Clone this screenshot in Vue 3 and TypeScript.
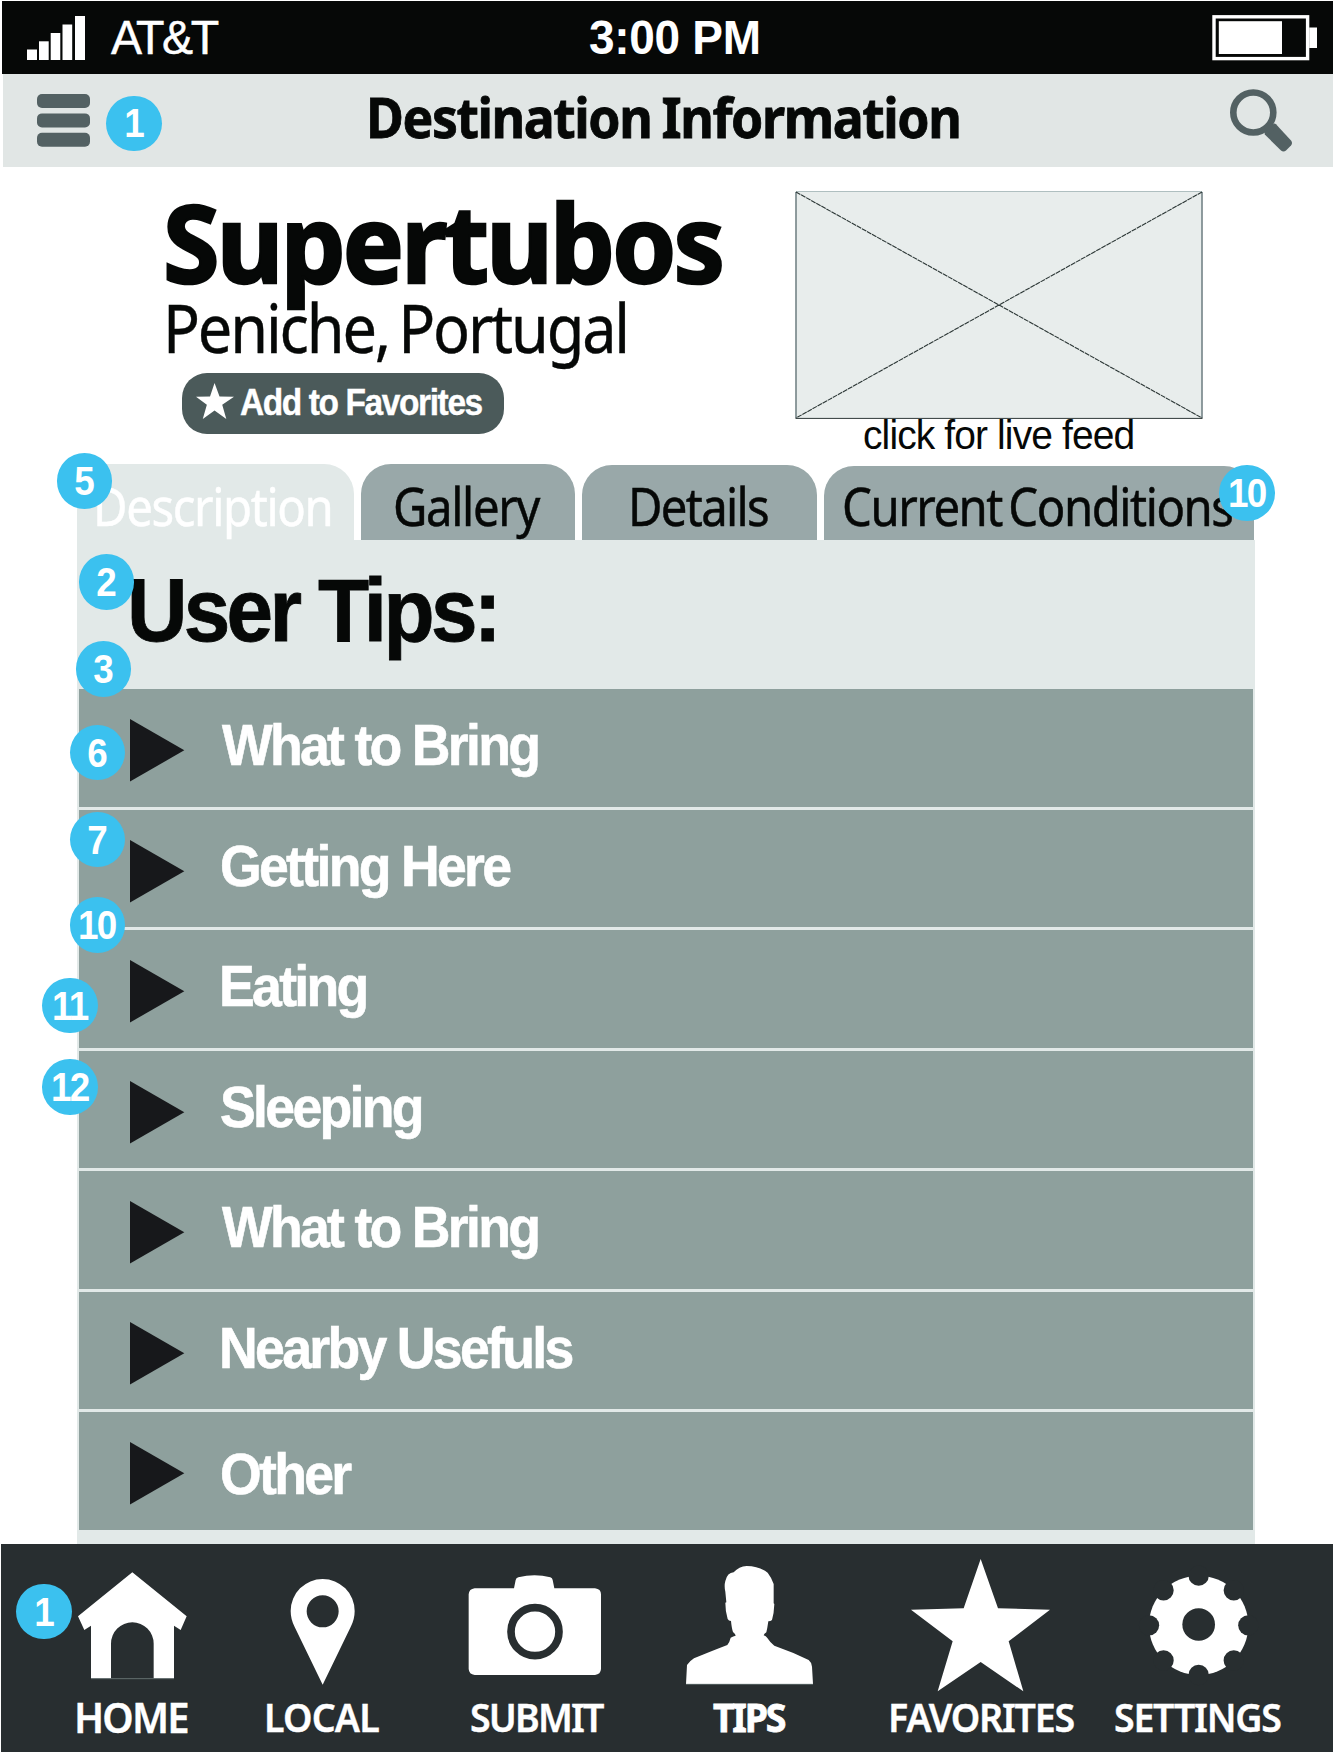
<script setup lang="ts">
interface Tab { label: string; cls: string }
interface Tip { label: string; indent: number; drop: number }
interface Badge { n: number; x: number; y: number }

const tabs: Tab[] = [
  { label: 'Description', cls: 'tab-description' },
  { label: 'Gallery', cls: 'tab-gallery' },
  { label: 'Details', cls: 'tab-details' },
  { label: 'Current Conditions', cls: 'tab-conditions' },
]

const tips: Tip[] = [
  { label: 'What to Bring', indent: 36.5, drop: 26 },
  { label: 'Getting Here', indent: 34.5, drop: 26.5 },
  { label: 'Eating', indent: 33.5, drop: 26 },
  { label: 'Sleeping', indent: 34.5, drop: 26.5 },
  { label: 'What to Bring', indent: 36.5, drop: 26 },
  { label: 'Nearby Usefuls', indent: 33.5, drop: 26 },
  { label: 'Other', indent: 34.5, drop: 32 },
]

const badges: Badge[] = [
  { n: 1, x: 134, y: 123.3 },
  { n: 5, x: 84.6, y: 480.8 },
  { n: 10, x: 1247, y: 492.8 },
  { n: 2, x: 106.6, y: 582.2 },
  { n: 3, x: 103.5, y: 669.2 },
  { n: 6, x: 97.5, y: 752.7 },
  { n: 7, x: 97.5, y: 839.7 },
  { n: 10, x: 97.5, y: 925 },
  { n: 11, x: 70, y: 1005.7 },
  { n: 12, x: 70, y: 1086.8 },
  { n: 1, x: 43.8, y: 1611.7 },
]

const notches = [0, 45, 90, 135, 180, 225, 270, 315]
</script>

<template>
  <div class="screen">
    <header class="status">
      <svg class="signal" width="49" height="45" viewBox="0 0 49 45" fill="#fff">
        <rect x="0" y="33.5" width="10" height="10.5" />
        <rect x="12" y="25.3" width="9.7" height="18.7" />
        <rect x="23.7" y="17" width="9.6" height="27" />
        <rect x="35.5" y="8.5" width="9.7" height="35.5" />
        <rect x="48" y="0" width="10" height="44" />
      </svg>
      <span class="carrier"><b class="fit">AT&amp;T</b></span>
      <span class="time"><b class="fit">3:00 PM</b></span>
      <svg class="battery" width="106" height="46" viewBox="0 0 106 46">
        <rect x="2" y="1.8" width="93.6" height="41.8" fill="none" stroke="#fff" stroke-width="3.4" />
        <rect x="6.8" y="6.2" width="63.2" height="32.8" fill="#fff" />
        <rect x="97.2" y="12.5" width="7.8" height="20.5" fill="#fff" />
      </svg>
    </header>

    <div class="titlebar">
      <svg class="menu" width="53" height="54" viewBox="0 0 53 54" fill="#536163">
        <rect y="0" width="53" height="14" rx="5" />
        <rect y="19.4" width="53" height="14" rx="5" />
        <rect y="38.7" width="53" height="14" rx="5" />
      </svg>
      <h1><span class="fit">Destination Information</span></h1>
      <svg class="search" width="64" height="66" viewBox="0 0 64 66">
        <circle cx="23.3" cy="23.5" r="20" fill="none" stroke="#536163" stroke-width="6.6" />
        <path d="M34.500 43.500 L44 34.500 Q45 34.200 46 35.200 L61 51.500 Q63 54 61 56.500 L56 61.500 Q53.500 63.500 51 61.500 L34.800 45.500 Z" fill="#536163" />
        <path d="M37 36 L43 42" stroke="#536163" stroke-width="8" />
      </svg>
    </div>

    <section class="hero">
      <div class="place">
        <h2><span class="fit">Supertubos</span></h2>
        <p class="region"><span class="fit">Peniche, Portugal</span></p>
        <button class="favorite" type="button">
          <svg width="38" height="36" viewBox="0 0 84 107" preserveAspectRatio="none" fill="#fff">
            <path d="M41 0 L52 40 L84 41 L58 65 L67 107 L41 82 L15 107 L24 65 L0 41 L31 40 Z" />
          </svg>
          <span class="fit">Add to Favorites</span>
        </button>
      </div>
      <figure class="feed">
        <svg width="408" height="228" viewBox="0 0 408 228">
          <rect x="0.5" y="0.5" width="407" height="227" fill="#e8edec" />
          <path d="M1 0.500 H407" stroke="#afbfc0" />
          <path d="M1 1 V227 M407 1 V227" stroke="#65767a" stroke-width="1.4" />
          <path d="M1 1 L407 227 M407 1 L1 227" stroke="#2b3635" stroke-width="1.100" stroke-dasharray="5 0.800" />
          <path d="M0.500 227.400 H407.500" stroke="#2e3838" />
        </svg>
        <figcaption><span class="fit">click for live feed</span></figcaption>
      </figure>
    </section>

    <nav class="tabs">
      <div v-for="t in tabs" :key="t.label" class="tab" :class="t.cls">
        <span class="fit">{{ t.label }}</span>
      </div>
    </nav>

    <main class="panel">
      <h3><span class="fit">User Tips:</span></h3>
      <ul class="tips">
        <li v-for="(tip, i) in tips" :key="i">
          <svg class="arrow" width="55" height="63" viewBox="0 0 55 63"><path d="M0 0 L54.300 31.300 L0 62.500 Z" fill="#17181b" /></svg>
          <span class="fit" :style="{ marginLeft: tip.indent + 'px', marginTop: tip.drop + 'px' }">{{ tip.label }}</span>
        </li>
      </ul>
    </main>

    <footer class="dock">
      <div class="item home">
        <svg width="221" height="153" viewBox="3 69 663 459">
          <path fill="#fff" d="M397 157 L560 289 L542 330 L522 317 V475 H461 V371 A64 64 0 0 0 333 371 V475 H273 V317 L253 330 L234 289 Z" />
          <path d="M273 476 H522" stroke="#6f7c7b" stroke-width="2.500" />
        </svg>
        <span class="fit">HOME</span>
      </div>
      <div class="item local">
        <svg width="200" height="153" viewBox="666 69 600 459">
          <path fill="#fff" fill-rule="evenodd" d="M968 494 L884 321 Q872 298 872 273 A96 96 0 0 1 1064 273 Q1064 298 1052 321 Z M968 226 A48 48 0 1 0 968 322 A48 48 0 1 0 968 226 Z" />
        </svg>
        <span class="fit">LOCAL</span>
      </div>
      <div class="item submit">
        <svg width="220" height="153" viewBox="-54 69 660 459">
          <path fill="#fff" d="M104 205 H222 L227 180 Q228 174 235 172 Q284 160 331 172 Q337 174 338 180 L343 205 H465 Q483 207 483 223 V447 Q482 463 465 465 H104 Q87 463 86 447 V223 Q87 207 104 205 Z" />
          <circle cx="285" cy="335" r="72" fill="none" stroke="#282e30" stroke-width="23" />
        </svg>
        <span class="fit">SUBMIT</span>
      </div>
      <div class="item person">
        <svg width="214" height="153" viewBox="606 69 642 459">
          <path fill="#fff" d="M738 492 L741 435 Q748 424 762 415 Q805 397 862 375 Q868 369 872 353 Q880 348 887 347 Q887 342 879 336 Q875 325 873 303 Q866 303 863 297 Q856 275 856 248 L859 247 L856 215 Q852 198 856 183 Q862 158 881 157 Q897 139 920 138 Q960 139 983 158 Q996 175 1001 192 V250 L1003 252 Q1002 280 996 300 Q992 304 985 304 Q982 325 979 337 Q972 342 971 346 Q978 348 982 354 Q990 367 1003 377 Q1058 396 1106 420 Q1114 426 1116 440 L1119 492 Z" />
          <path d="M738 493 H1119" stroke="#5f6d6c" stroke-width="2.500" />
        </svg>
        <span class="fit">TIPS</span>
      </div>
      <div class="item favorites">
        <svg width="244" height="153" viewBox="-12 69 732 459">
          <path fill="#fff" d="M362 117 L414 265 L570 269 L446 364 L490 514 L362 426 L233 514 L278 364 L153 269 L311 265 Z" />
        </svg>
        <span class="fit">FAVORITES</span>
      </div>
      <div class="item settings">
        <svg width="232" height="153" viewBox="720 69 696 459">
          <circle cx="1016" cy="316" r="149" fill="#fff" />
          <g fill="#282e30">
            <circle v-for="a in notches" :key="a" cx="1016" cy="167" r="30.500" :transform="`rotate(${a} 1016 316)`" />
            <circle cx="1016" cy="313.500" r="49" />
          </g>
        </svg>
        <span class="fit">SETTINGS</span>
      </div>
    </footer>

    <i v-for="(b, i) in badges" :key="i" class="badge" :style="{ left: b.x - 27.8 + 'px', top: b.y - 27.8 + 'px' }">
      <span>{{ b.n }}</span>
    </i>
  </div>
</template>

<style>
body {
  background: #fff;
}
</style>

<style scoped>
.screen {
  position: relative;
  width: 1333px;
  height: 1752px;
  overflow: hidden;
  display: flex;
  flex-direction: column;
  color: #060807;
  background: #fff;
  font-family: "Liberation Sans", Arial, sans-serif;
}

svg {
  display: block;
  flex: none;
}

h1,
h2,
h3,
p,
ul,
figure {
  margin: 0;
  padding: 0;
}

.fit {
  display: block;
  width: max-content;
  white-space: nowrap;
  transform-origin: 0 50%;
}

/* status bar */
.status {
  display: flex;
  flex: none;
  height: 73px;
  box-sizing: border-box;
  margin: 1px 0 0 2px;
  background: #060807;
  color: #fff;
}

.signal {
  margin: 15px 0 0 25px;
  overflow: visible;
}

.carrier {
  width: 478.500px;
  margin: 6px 0 0 34.500px;
}

.carrier .fit {
  font: 400 49px/60px "Liberation Sans", sans-serif;
  letter-spacing: -2.600px;
  transform: scaleX(0.950);
  -webkit-text-stroke: 0.500px currentColor;
}

.time {
  width: 623px;
  margin-top: 6px;
}

.time .fit {
  font: 700 49px/60px "Liberation Sans", sans-serif;
  letter-spacing: -0.300px;
  transform: scaleX(0.938);
}

.battery {
  margin-top: 14px;
}

/* title bar */
.titlebar {
  display: flex;
  flex: none;
  height: 93px;
  margin-left: 3px;
  background: #e1e6e5;
}

.menu {
  margin: 20px 0 0 33.500px;
}

.titlebar h1 {
  width: 864.600px;
  margin: 3px 0 0 276px;
}

.titlebar h1 .fit {
  font: 700 55px/80px "Noto Sans", "Open Sans", sans-serif;
  letter-spacing: -1.500px;
  word-spacing: -2px;
  transform: scaleX(0.940);
  -webkit-text-stroke: 0.800px currentColor;
}

.search {
  margin-top: 15px;
}

/* hero */
.hero {
  display: flex;
  flex: none;
  height: 296px;
}

.place {
  width: 632px;
  padding: 20px 0 0 163px;
}

.place h2 .fit {
  font: 700 108px/110px "Noto Sans", "Open Sans", sans-serif;
  letter-spacing: -2.900px;
  transform: scaleX(0.950);
  -webkit-text-stroke: 2.500px currentColor;
}

.region {
  margin-top: -5.500px;
}

.region .fit {
  font: 400 68px/70px "Noto Sans", "Open Sans", sans-serif;
  letter-spacing: -2.400px;
  word-spacing: -5px;
  transform: scaleX(0.900);
  -webkit-text-stroke: 0.400px currentColor;
}

.favorite {
  display: flex;
  box-sizing: border-box;
  width: 322px;
  height: 61px;
  margin: 11.500px 0 0 18.500px;
  padding: 10px 0 0 14px;
  border: 0;
  border-radius: 25px;
  background: #4b5a5a;
  color: #fff;
}

.favorite .fit {
  margin: -0.500px 0 0 6px;
  font: 700 36px/40px "Liberation Sans", sans-serif;
  letter-spacing: -1.500px;
  transform: scaleX(0.930);
  -webkit-text-stroke: 0.400px currentColor;
}

.feed {
  padding-top: 24px;
}

.feed figcaption {
  margin: -6px 0 0 68px;
}

.feed figcaption .fit {
  font: 400 41px/44px "Liberation Sans", sans-serif;
  letter-spacing: -0.920px;
  transform: scaleX(0.950);
}

/* tabs */
.tabs {
  display: flex;
  flex: none;
  align-items: flex-end;
  height: 77px;
  padding-left: 77px;
}

.tab {
  display: flex;
  align-items: flex-end;
  box-sizing: border-box;
  height: 76px;
  margin-right: 7px;
  padding-bottom: 4px;
  border-radius: 30px 30px 0 0;
  background: #99a8a9;
}

.tab .fit {
  font: 400 52.500px/60px "Noto Sans", "Open Sans", sans-serif;
  letter-spacing: -1.500px;
  transform: scaleX(0.900);
  -webkit-text-stroke: 0.500px currentColor;
}

.tab-description {
  width: 277px;
  padding-left: 16px;
  background: #e2e9e8;
  color: #fff;
}

.tab-gallery {
  width: 213.500px;
  padding-left: 32px;
}

.tab-details {
  width: 235.500px;
  height: 75px;
  padding-left: 46px;
}

.tab-details .fit {
  letter-spacing: -1.850px;
}

.tab-conditions {
  width: 430px;
  height: 74px;
  margin-right: 0;
  padding-left: 18.300px;
}

.tab-conditions .fit {
  letter-spacing: -1.600px;
  word-spacing: -5px;
}

/* panel */
.panel {
  flex: none;
  box-sizing: border-box;
  width: 1178px;
  height: 1004px;
  margin-left: 77px;
  background: #e2e9e8;
}

.panel h3 {
  box-sizing: border-box;
  height: 149px;
  padding: 20px 0 0 50px;
}

.panel h3 .fit {
  font: 700 89px/100px "Liberation Sans", sans-serif;
  letter-spacing: -3.900px;
  transform: scaleX(0.940);
  -webkit-text-stroke: 0.800px currentColor;
}

.tips {
  display: flex;
  flex-direction: column;
  gap: 2.800px;
  margin: 0 2px;
  list-style: none;
}

.tips li {
  display: flex;
  align-items: flex-start;
  height: 117.740px;
  background: #8ea09d;
  color: #fff;
}

.arrow {
  margin: 30px 0 0 51.200px;
}

.tips .fit {
  font: 700 57px/60px "Liberation Sans", sans-serif;
  letter-spacing: -2.850px;
  transform: scaleX(0.940);
  -webkit-text-stroke: 0.600px currentColor;
}

/* dock */
.dock {
  display: flex;
  flex: none;
  height: 208px;
  margin-left: 1px;
  background: #282e30;
  color: #fff;
}

.item svg {
  margin-top: -1px;
}

.item .fit {
  font: 600 39.500px/40px "Noto Sans", "Open Sans", sans-serif;
  transform: scaleX(0.950);
  margin-top: 1px;
  -webkit-text-stroke: 0.400px currentColor;
}

.home .fit {
  margin-left: 73px;
  font-size: 42px;
  letter-spacing: -1.900px;
}

.local .fit {
  margin-left: 41.500px;
  letter-spacing: -0.850px;
}

.submit .fit {
  margin-left: 47.800px;
  letter-spacing: -1.900px;
}

.person .fit {
  margin-left: 71.300px;
  font-weight: 700;
  letter-spacing: -2.400px;
  -webkit-text-stroke-width: 0.800px;
}

.favorites .fit {
  margin-left: 31.500px;
  letter-spacing: -1.300px;
}

.settings .fit {
  margin-left: 14px;
  letter-spacing: -1.300px;
}

/* numbered callouts */
.badge {
  position: absolute;
  display: flex;
  align-items: center;
  justify-content: center;
  width: 55.600px;
  height: 55.600px;
  border-radius: 50%;
  background: #3bc1ef;
  color: #fff;
  font: 700 40px/56px "Liberation Sans", sans-serif;
  letter-spacing: -2px;
}

.badge span {
  transform: translateX(-0.500px) scaleX(0.920);
}
</style>
